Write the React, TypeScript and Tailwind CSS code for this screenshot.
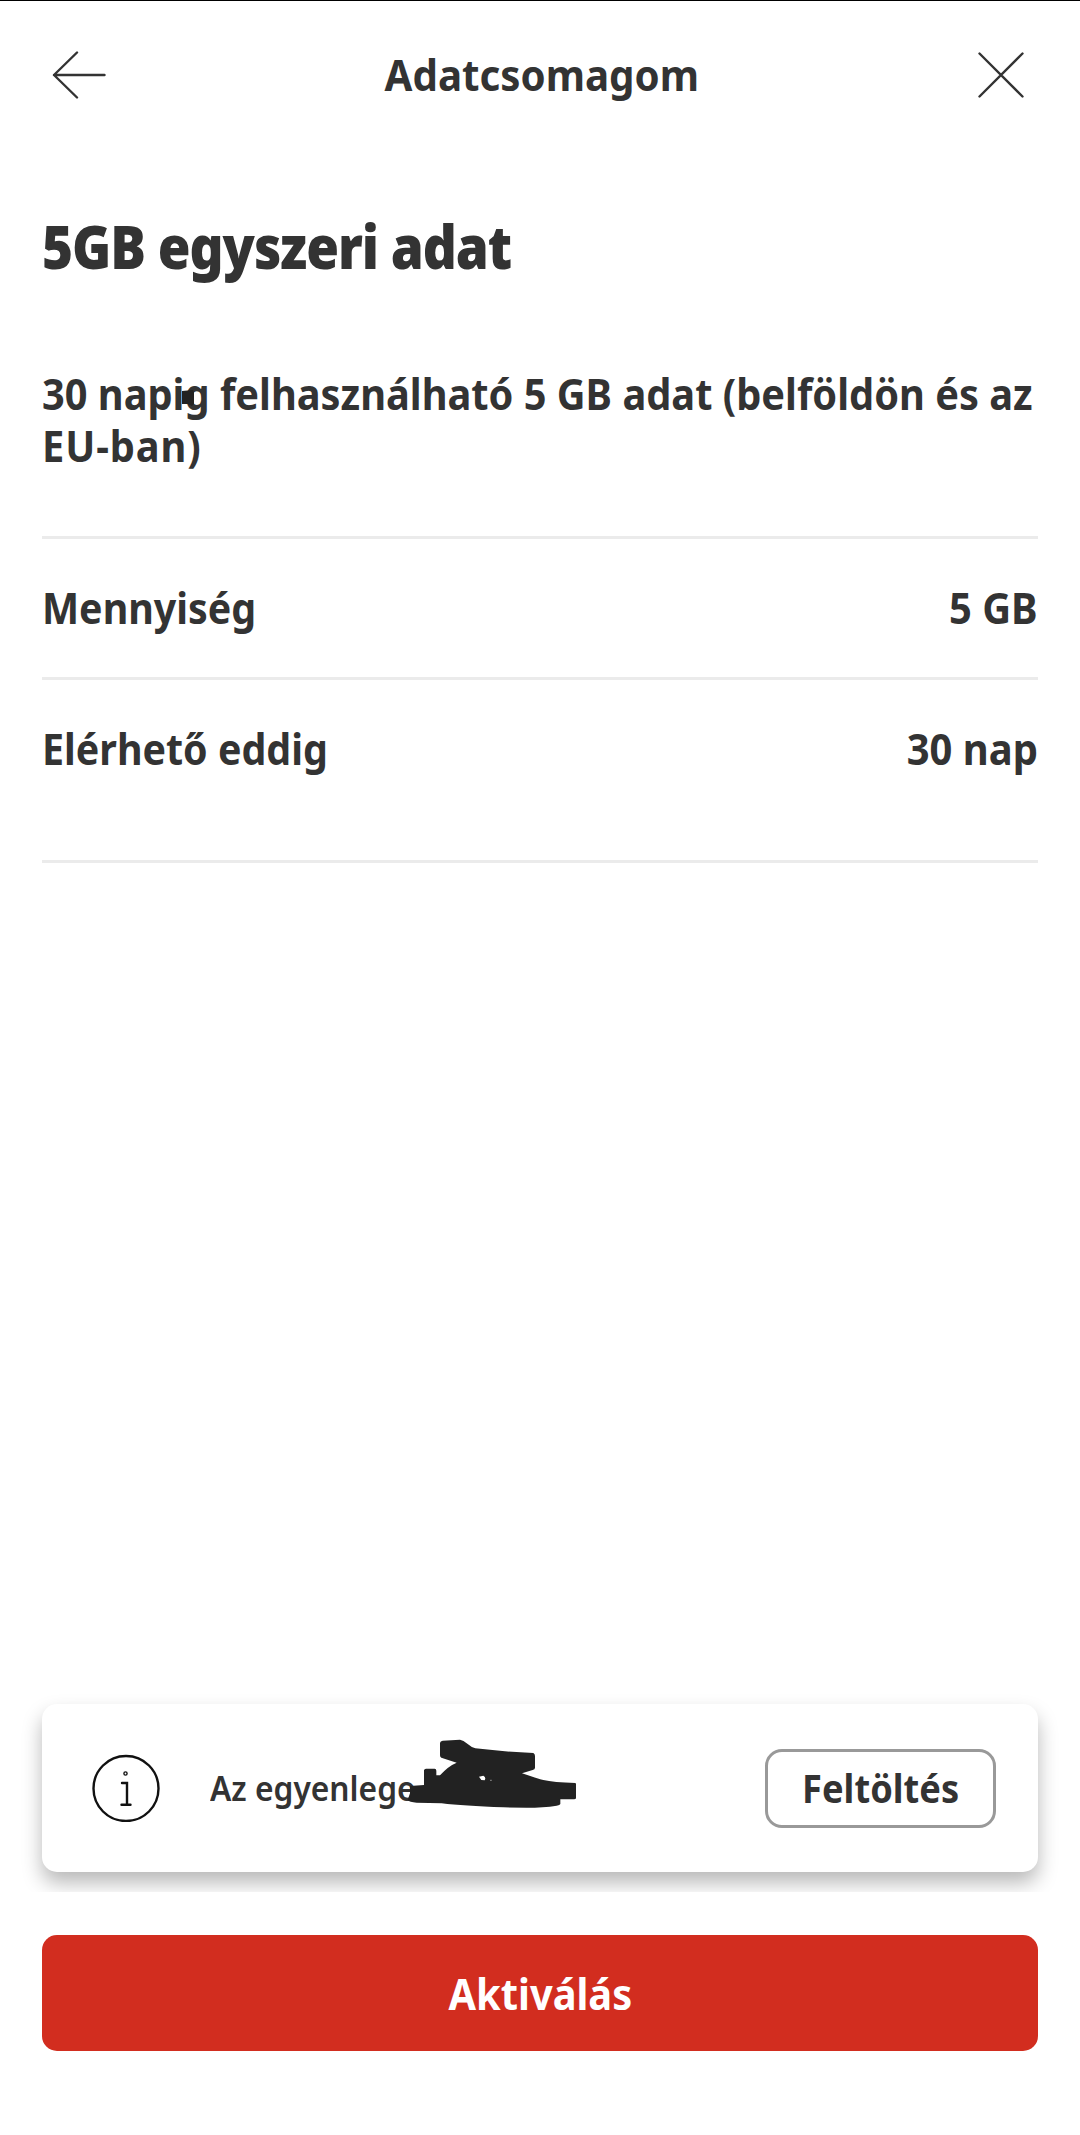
import React from 'react';

interface DetailRowProps {
  label: string;
  value: string;
  className?: string;
}

const BackIcon: React.FC = () => (
  <svg
    className="h-12 w-14"
    viewBox="0 0 56 48"
    fill="none"
    stroke="#333333"
    strokeWidth="2.4"
    strokeLinecap="round"
    strokeLinejoin="round"
  >
    <path d="M54.5 24H4M27 1.5L4 24l23 22.5" />
  </svg>
);

const CloseIcon: React.FC = () => (
  <svg
    className="size-12"
    viewBox="0 0 48 48"
    fill="none"
    stroke="#333333"
    strokeWidth="2.4"
    strokeLinecap="round"
  >
    <path d="M2.5 2.5l43 43M45.5 2.5l-43 43" />
  </svg>
);

const InfoIcon: React.FC = () => (
  <svg className="size-[68px] shrink-0" viewBox="0 0 68 68" fill="none" stroke="#111111">
    <circle cx="34" cy="34.5" r="32.5" strokeWidth="2.4" />
    <circle cx="33.5" cy="19.5" r="1.6" strokeWidth="1.4" />
    <path d="M30 29h5V50.5M29.5 50.7h9" strokeWidth="2.4" strokeLinecap="round" />
  </svg>
);

// Marker stroke that hides the balance
const BalanceMask: React.FC = () => (
  <svg
    className="absolute left-[358px] top-8 h-[76px] w-[180px]"
    viewBox="60 108 540 228"
    fill="#222222"
  >
    <path
      fillRule="evenodd"
      d="M90 258L132 255V211Q133 206 138 206H164Q169 206 169 212V226H180Q205 198 230 188L184 173Q180 171 180 166V129Q181 123 188 122L240 119Q250 120 262 131Q275 142 286 145Q370 155 460 159Q465 162 465 168V203Q465 208 458 210L426 220Q470 235 490 240Q520 247 586 249Q588 250 588 253V294Q588 298 582 298H541V312Q540 316 530 317Q490 323 440 323L370 322Q250 318 185 310L110 308Q88 306 83 300L90 280ZM297 230L310 227Q316 230 316 236L314 241L304 240ZM330 240L334 239L334 243Z"
    />
  </svg>
);

const DetailRow: React.FC<DetailRowProps> = ({ label, value, className = '' }) => (
  <div
    className={`flex items-start justify-between whitespace-nowrap border-b-[3px] border-[#ebebeb] pt-[42px] text-[43.5px] leading-[52px] ${className}`}
  >
    <span className="origin-left scale-x-[0.905]">{label}</span>
    <span className="origin-right scale-x-[0.918]">{value}</span>
  </div>
);

export default function App() {
  return (
    <div className="flex h-[2135px] w-[1080px] flex-col overflow-hidden border-t border-black bg-white font-['Noto_Sans',sans-serif] font-bold text-[#333333]">
      <header className="flex h-[146px] items-center justify-between pl-[50px] pr-[55px]">
        <button aria-label="Vissza" className="pt-px">
          <BackIcon />
        </button>
        <h1 className="scale-x-[0.926] text-[43.5px] leading-[52px]">Adatcsomagom</h1>
        <button aria-label="Bezárás" className="pt-px">
          <CloseIcon />
        </button>
      </header>

      <main className="flex grow flex-col px-[42px]">
        <h2 className="mt-[59px] w-fit origin-left scale-x-[0.87] whitespace-nowrap text-[61px] font-black leading-[80px] tracking-[-1.2px]">
          5GB egyszeri adat
        </h2>

        <div className="relative mt-[81px] border-b-[3px] border-[#ebebeb] pb-[65px]">
          <p className="origin-left scale-x-[0.914] whitespace-nowrap text-[43.5px] leading-[52px]">
            30 napig felhasználható 5 GB adat (belföldön és az
            <br />
            <span className="tracking-[1px]">EU-ban)</span>
          </p>
          <svg className="absolute left-[139px] top-[23px] h-4 w-[14px]" viewBox="0 0 14 16" fill="#222222">
            <path d="M1 1l11-1 1 2v12l-2 2-4-2H1z" />
          </svg>
        </div>

        <DetailRow label="Mennyiség" value="5 GB" className="h-[141px]" />
        <DetailRow label="Elérhető eddig" value="30 nap" className="h-[183px]" />
      </main>

      <footer>
        {/* the card's shadow ends where the action area starts */}
        <div className="overflow-hidden px-[42px] pb-5 pt-8">
          <div className="relative flex h-[168px] items-center rounded-[15px] bg-white pl-[50px] pr-[42px] shadow-[0_11px_20px_rgba(0,0,0,0.28)]">
            <InfoIcon />
            <span className="ml-[50px] origin-left scale-x-[0.92] text-[34.5px] font-semibold leading-[46px]">
              Az egyenlege
            </span>
            <BalanceMask />
            <button className="ml-auto flex h-[79px] w-[231px] items-center justify-center rounded-[17px] border-[3px] border-[#999999]">
              <span className="scale-x-[0.917] text-[39.5px] leading-[48px]">Feltöltés</span>
            </button>
          </div>
        </div>
        <div className="bg-white px-[42px] pb-[84px] pt-[43px]">
          <button className="flex h-[116px] w-full items-center justify-center rounded-[15px] bg-[#d22d1f] text-white">
            <span className="scale-x-[0.915] text-[43.5px] leading-[52px]">Aktiválás</span>
          </button>
        </div>
      </footer>
    </div>
  );
}
